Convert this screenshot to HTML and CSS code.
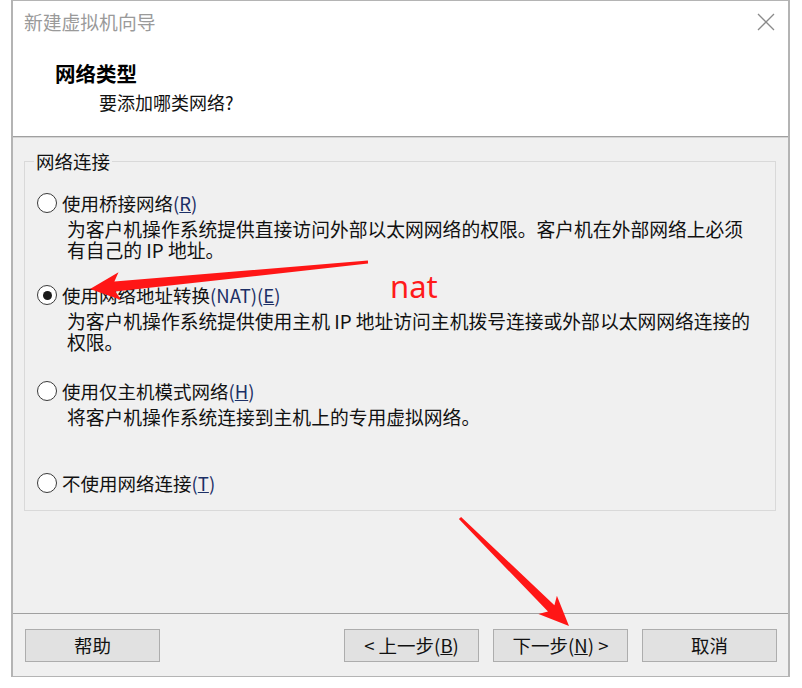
FILE: index.html
```html
<!DOCTYPE html>
<html lang="zh-CN">
<head>
<meta charset="utf-8">
<title>新建虚拟机向导</title>
<link rel="stylesheet" href="styles.css">
</head>
<body>
<div class="dialog">
  <div class="header">
    <div class="titlebar">
      <span class="title">新建虚拟机向导</span>
      <svg class="close" width="18" height="18" viewBox="0 0 18 18"><path d="M1 1 L17 17 M17 1 L1 17" stroke="#8a8a8a" stroke-width="1.3" fill="none"/></svg>
    </div>
    <div class="heading">网络类型</div>
    <div class="subheading">要添加哪类网络?</div>
  </div>
  <div class="body">
    <fieldset class="group">
      <legend class="group-label">网络连接</legend>
      <div class="option opt1">
        <div class="opt-row"><span class="radio"></span><span class="opt-label">使用桥接网络<span class="key">(<u>R</u>)</span></span></div>
        <div class="desc">为客户机操作系统提供直接访问外部以太网网络的权限。客户机在外部网络上必须<br>有自己的 IP 地址。</div>
      </div>
      <div class="option opt2">
        <div class="opt-row"><span class="radio checked"></span><span class="opt-label">使用网络地址转换<span class="key">(NAT)(<u>E</u>)</span></span></div>
        <div class="desc">为客户机操作系统提供使用主机 IP 地址访问主机拨号连接或外部以太网网络连接的<br>权限。</div>
      </div>
      <div class="option opt3">
        <div class="opt-row"><span class="radio"></span><span class="opt-label">使用仅主机模式网络<span class="key">(<u>H</u>)</span></span></div>
        <div class="desc">将客户机操作系统连接到主机上的专用虚拟网络。</div>
      </div>
      <div class="option opt4">
        <div class="opt-row"><span class="radio"></span><span class="opt-label">不使用网络连接<span class="key">(<u>T</u>)</span></span></div>
      </div>
    </fieldset>
  </div>
  <div class="footer">
    <button class="btn">帮助</button>
    <span class="spacer"></span>
    <button class="btn">&lt; 上一步(<u>B</u>)</button>
    <button class="btn">下一步(<u>N</u>) &gt;</button>
    <button class="btn">取消</button>
  </div>
</div>
<div class="note">nat</div>
<svg class="arrows" width="802" height="688" viewBox="0 0 802 688">
  <polygon fill="#ff1616" points="90,289 118.5,272.2 114.4,281.6 367.9,260.5 368.1,263.5 115.4,291.6 121.2,300"/>
  <polygon fill="#ff1616" points="569,626 538.5,614.1 548,611.6 458.9,519.1 461.1,516.9 554.4,605.2 556.9,595.7"/>
</svg>
</body>
</html>
```
FILE: styles.css
```css
* { box-sizing: border-box; }
html, body { margin: 0; padding: 0; background: #fff; }
body {
  position: relative;
  width: 802px;
  height: 688px;
  overflow: hidden;
  font-family: "Noto Sans CJK SC", "Noto Sans", sans-serif;
  font-size: 18.5px;
  color: #111;
}
.dialog {
  margin-left: 11px;
  width: 779px;
  height: 677px;
  border-top: 1px solid #b4b4b4;
  border-bottom: 1px solid #b4b4b4;
  border-left: 2px solid #b4b4b4;
  border-right: 2px solid #b4b4b4;
  display: flex;
  flex-direction: column;
}
.header {
  height: 136px;
  background: #fff;
  border-bottom: 1px solid #a0a0a0;
  flex: none;
}
.titlebar {
  height: 42px;
  display: flex;
  align-items: center;
  justify-content: space-between;
  padding: 0 13px 0 11px;
}
.title { color: #9a9a9a; font-size: 18.8px; line-height: 22px; }
.close { display: block; }
.heading {
  margin-top: 18px;
  padding-left: 42px;
  font-size: 20.5px;
  font-weight: bold;
  line-height: 24px;
  color: #000;
}
.subheading {
  margin-top: 5px;
  padding-left: 86px;
  font-size: 18px;
  line-height: 24px;
  color: #111;
}
.body {
  height: 476px;
  flex: none;
  background: #f0f0f0;
  border-top: 1px solid #d4d4d4;
  padding: 12px 12px 0 11px;
}
.group {
  margin: 0;
  padding: 20px 0 16px 12px;
  border: 1px solid #d9d9d9;
  min-width: 0;
}
.group-label {
  margin-left: -3px;
  padding: 0 2px;
  line-height: 22px;
  font-size: 18.5px;
}
.option { margin-bottom: 24px; }
.opt2 { margin-bottom: 28px; }
.opt3 { margin-bottom: 45px; }
.opt4 { margin-bottom: 0; }
.opt-row {
  display: flex;
  align-items: center;
  gap: 5px;
  height: 22px;
  white-space: nowrap;
}
.radio {
  width: 20px;
  height: 20px;
  border-radius: 50%;
  border: 1.5px solid #3a3a3a;
  background: #fff;
  flex: none;
  display: flex;
  align-items: center;
  justify-content: center;
}
.radio.checked::after {
  content: "";
  width: 9px;
  height: 9px;
  border-radius: 50%;
  background: #1a1a1a;
}
.opt-label { line-height: 22px; }
.key { color: #1c2f66; }
.desc {
  margin-top: 4px;
  padding-left: 30px;
  font-size: 18.8px;
  line-height: 21px;
  white-space: nowrap;
}
.footer {
  flex: 1;
  background: #f0f0f0;
  border-top: 1px solid #a0a0a0;
  display: flex;
  align-items: flex-start;
  padding: 15px 11px 0 12px;
  gap: 14px;
}
.spacer { flex: 1; }
.btn {
  width: 135px;
  height: 33px;
  background: #e1e1e1;
  border: 1px solid #adadad;
  font-family: "Noto Sans CJK SC", "Noto Sans", sans-serif;
  font-size: 18.5px;
  color: #111;
  padding: 0;
  line-height: 31px;
}
.note {
  position: absolute;
  left: 390px;
  top: 268px;
  font-family: "Noto Sans", sans-serif;
  font-size: 31px;
  line-height: 36px;
  color: #ff1a1a;
}
.arrows {
  position: absolute;
  left: 0;
  top: 0;
  pointer-events: none;
}
```
